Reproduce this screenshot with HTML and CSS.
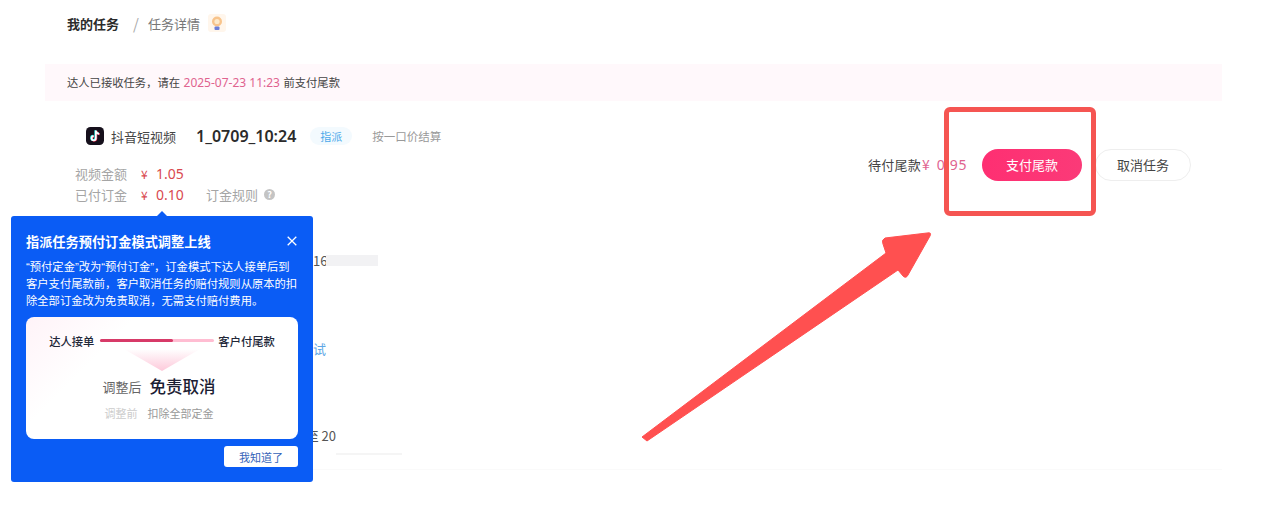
FILE: index.html
```html
<!DOCTYPE html>
<html lang="zh-CN">
<head>
<meta charset="UTF-8" />
<meta name="viewport" content="width=device-width, initial-scale=1" />
<title>任务详情</title>
<link rel="stylesheet" href="styles.css">
</head>
<body>

<div class="crumbs">
  <b>我的任务</b>
  <span class="slash">/</span>
  <span class="crumbNow">任务详情</span>
  <svg class="bulb" width="18" height="18" viewBox="0 0 18 18">
    <rect width="18" height="18" rx="3" fill="#fff6ec" />
    <circle cx="9" cy="7.5" r="5" fill="#f8c48c" />
    <circle cx="9" cy="7.5" r="2.6" fill="#fdeacb" />
    <rect x="6.5" y="12.5" width="5" height="3.5" rx="1" fill="#6d7fd8" />
  </svg>
</div>

<div class="notice">达人已接收任务，请在 <span class="pink">2025-07-23 11:23</span> 前支付尾款</div>

<div class="detail">
  <div class="taskInfo">
    <div class="titleRow">
      <svg class="tiktok" width="18" height="18" viewBox="0 0 18 18">
        <rect width="18" height="18" rx="4.5" fill="#16101c" />
        <path d="M9.8 3.6v7.6a2.1 2.1 0 1 1-2.1-2.1M9.8 3.6c.3 1.9 1.5 3 3.4 3.2" fill="none" stroke="#fe2c55" stroke-width="1.9" transform="translate(.5 .4)" />
        <path d="M9.8 3.6v7.6a2.1 2.1 0 1 1-2.1-2.1M9.8 3.6c.3 1.9 1.5 3 3.4 3.2" fill="none" stroke="#25f4ee" stroke-width="1.9" transform="translate(-.5 -.3)" />
        <path d="M9.8 3.6v7.6a2.1 2.1 0 1 1-2.1-2.1M9.8 3.6c.3 1.9 1.5 3 3.4 3.2" fill="none" stroke="#fff" stroke-width="1.7" />
      </svg>
      <span class="platform">抖音短视频</span>
      <b class="taskName">1_0709_10:24</b>
      <span class="tag">指派</span>
      <span class="priceMode">按一口价结算</span>
    </div>
    <div class="money">
      <span class="moneyLabel">视频金额</span>
      <span class="yen">¥</span>
      <span class="amount">1.05</span>
    </div>
    <div class="money">
      <span class="moneyLabel">已付订金</span>
      <span class="yen">¥</span>
      <span class="amount">0.10</span>
      <span class="rules">订金规则</span>
      <span class="help">?</span>
    </div>
  </div>

  <div class="actions">
    <span class="dueLabel">待付尾款</span>
    <span class="dueYen">¥</span>
    <span class="dueAmount">0.95</span>
    <button class="payBtn">支付尾款</button>
    <button class="cancelBtn">取消任务</button>
  </div>
</div>

<div class="rows">
  <div class="row rowFirst"><span>16</span><i class="blurBar"></i></div>
  <div class="row rowLink">试</div>
  <div class="row rowDate">至 20</div>
  <div class="rowUnderline"></div>
</div>
<div class="bottomLine"></div>

<!-- guide popup over the left column -->
<div class="guide">
  <div class="guideHead">
    <b>指派任务预付订金模式调整上线</b>
    <svg class="guideClose" width="10" height="10" viewBox="0 0 10 10"><path d="M.7.7l8.6 8.6M9.3.7L.7 9.3" stroke="#fff" stroke-width="1.3" /></svg>
  </div>
  <p class="guideText">“预付定金”改为“预付订金”，订金模式下达人接单后到客户支付尾款前，客户取消任务的赔付规则从原本的扣除全部订金改为免责取消，无需支付赔付费用。</p>
  <div class="guideCard">
    <div class="timeline">
      <span>达人接单</span>
      <div class="track"><i></i></div>
      <span>客户付尾款</span>
    </div>
    <div class="funnel"></div>
    <div class="after"><span>调整后</span><b>免责取消</b></div>
    <div class="before"><span>调整前</span>扣除全部定金</div>
  </div>
  <div class="guideFoot"><button class="gotIt">我知道了</button></div>
</div>

<!-- red annotation drawn on the screenshot -->
<div class="markBox"></div>
<svg class="markArrow" width="300" height="215" viewBox="0 0 300 215">
  <path d="M2 209 L7 213 L258 42 L263 48 Q266 51 268 47 L290 8 Q292 4 287 5 L245 10 Q241 12 243 16 L246 25 Z" fill="#ff5050" stroke="#ff5050" stroke-linejoin="round" />
</svg>

</body>
</html>
```

FILE: styles.css
```css
* {
  box-sizing: border-box;
}
html, body {
  height: 100%;
}
body {
  margin: 0;
  padding: 0 58px 0 45px;
  background-color: white;
  color: #333;
  font-family: "Noto Sans CJK SC", "Noto Sans", sans-serif;
  font-size: 13px;
  overflow: hidden;
}
.crumbs {
  display: flex;
  align-items: center;
  height: 64px;
  padding: 0 0 18px 22px;
  color: #777;
}
.crumbs b {
  color: #2b2b2b;
}
.slash {
  margin: 0 9px 0 14px;
  font-size: 15px;
  color: #aaa;
}
.bulb {
  margin-left: 8px;
}
.notice {
  height: 37px;
  padding-left: 22px;
  line-height: 37px;
  font-size: 11.3px;
  color: #444;
  background-color: #fff8fb;
}
.pink {
  padding: 0 1px;
  font-family: "Noto Sans", sans-serif;
  font-size: 12px;
  color: #e0638f;
}
.detail {
  display: flex;
  justify-content: space-between;
  height: 110px;
  padding: 26px 31px 0 30px;
}
.titleRow {
  display: flex;
  align-items: center;
  height: 18px;
  padding-left: 11px;
}
.tiktok {
  margin-right: 7px;
}
.platform {
  color: #444;
}
.taskName {
  margin-left: 20px;
  font-family: "Noto Sans", sans-serif;
  font-size: 16px;
  font-weight: 600;
  color: #2b2b2b;
}
.tag {
  margin-left: 14px;
  padding: 0 10px;
  line-height: 18px;
  border-radius: 9px;
  font-size: 11px;
  color: #4ba8ea;
  background-color: #f3fafe;
}
.priceMode {
  margin-left: 20px;
  font-size: 11.5px;
  color: #999;
}
.money {
  display: flex;
  align-items: center;
  height: 21px;
  color: #a5a5a5;
}
.titleRow + .money {
  margin-top: 18px;
}
.moneyLabel {
  width: 66px;
}
.yen {
  width: 15px;
  font-size: 12px;
  color: #d9484f;
}
.amount {
  width: 50px;
  font-family: "Noto Sans", sans-serif;
  font-size: 14px;
  color: #d9484f;
}
.help {
  width: 11px;
  height: 11px;
  margin-left: 6px;
  border-radius: 50%;
  background-color: #c4c4c4;
  color: white;
  font-size: 9px;
  font-weight: bold;
  line-height: 11px;
  text-align: center;
}
.actions {
  display: flex;
  align-items: center;
  height: 32px;
  margin-top: 22px;
  color: #444;
}
.dueLabel {
  padding-bottom: 2px;
  letter-spacing: .25px;
}
.dueYen {
  margin-left: 1px;
  padding-bottom: 2px;
  font-size: 14px;
  color: #e0638f;
}
.dueAmount {
  margin-left: 7px;
  padding-bottom: 2px;
  font-family: "Noto Sans", sans-serif;
  font-size: 14px;
  letter-spacing: .6px;
  color: #e0638f;
}
.payBtn, .cancelBtn {
  height: 32px;
  padding: 0 0 2px;
  border-radius: 16px;
  font-family: inherit;
  font-size: 13px;
}
.payBtn {
  width: 100px;
  margin-left: 15px;
  border: none;
  color: white;
  background: linear-gradient(90deg, #fe2f72, #fb3a78);
}
.cancelBtn {
  width: 96px;
  margin-left: 13px;
  border: 1px solid #eee;
  color: #444;
  background-color: white;
}
.rows {
  padding-left: 268px;
  color: #555;
}
.row {
  display: flex;
  align-items: center;
  height: 18px;
}
.rowFirst {
  margin-top: 40px;
}
.blurBar {
  width: 52px;
  height: 11px;
  margin-left: -1px;
  background-color: #f2f2f4;
}
.rowLink {
  margin-top: 70px;
  color: #5fa8e6;
}
.rowDate {
  width: 23px;
  margin-top: 69px;
  overflow: hidden;
  white-space: nowrap;
  direction: rtl;
}
.rowUnderline {
  width: 66px;
  height: 2px;
  margin: 9px 0 0 23px;
  background-color: #f5f5f5;
}
.bottomLine {
  height: 1px;
  margin-top: 14px;
  background-color: #fafafa;
}
.guide {
  position: absolute;
  left: 11px;
  top: 216px;
  width: 302px;
  height: 266px;
  padding: 15px 15px 0;
  border-radius: 3px;
  color: white;
  background-color: #0a5cf5;
}
.guide::before {
  content: "";
  position: absolute;
  left: 145px;
  top: -5px;
  border: 6px solid transparent;
  border-top: none;
  border-bottom-color: #0a5cf5;
}
.guideHead {
  display: flex;
  justify-content: space-between;
  align-items: center;
  height: 20px;
  padding-right: 1px;
  font-size: 13.2px;
}
.guideText {
  margin: 8px 0 0;
  font-family: "Liberation Sans", "Noto Sans CJK SC", sans-serif;
  font-size: 11.3px;
  line-height: 17px;
}
.guideCard {
  height: 122px;
  margin-top: 7px;
  padding-top: 15px;
  border-radius: 8px;
  color: #666;
  text-align: center;
  background: linear-gradient(135deg, #fff3f8, white 28%);
}
.timeline {
  display: flex;
  justify-content: center;
  align-items: center;
  gap: 6px;
  height: 17px;
  font-size: 11.3px;
  font-weight: 500;
  color: #222738;
}
.track {
  width: 114px;
  height: 3px;
  margin-right: -2px;
  border-radius: 2px;
  background-color: #ffbdd2;
}
.track i {
  display: block;
  width: 73px;
  height: 3px;
  border-radius: 2px;
  background-color: #d73a68;
}
.funnel {
  width: 76px;
  height: 22px;
  margin: 0 auto;
  clip-path: polygon(0 0, 100% 0, 50% 100%);
  background: linear-gradient(#fff, #fdc9da);
}
.after {
  display: flex;
  justify-content: center;
  align-items: center;
  gap: 8px;
  height: 26px;
  margin-top: 2px;
  padding-right: 6px;
}
.after b {
  font-size: 16.5px;
  font-weight: 500;
  color: #1b2033;
}
.before {
  margin-top: 6px;
  padding-right: 6px;
  font-size: 11px;
  color: #999;
}
.before span {
  margin-right: 10px;
  color: #ccc;
}
.guideFoot {
  display: flex;
  justify-content: flex-end;
  margin-top: 7px;
}
.gotIt {
  width: 74px;
  height: 21px;
  padding: 0;
  border: none;
  border-radius: 3px;
  font-family: inherit;
  font-size: 11px;
  color: #3563b8;
  background-color: white;
}
.markBox {
  position: absolute;
  left: 944px;
  top: 107px;
  width: 152px;
  height: 109px;
  border: 5px solid #f55552;
  border-radius: 6px;
}
.markArrow {
  position: absolute;
  left: 640px;
  top: 228px;
}
```
